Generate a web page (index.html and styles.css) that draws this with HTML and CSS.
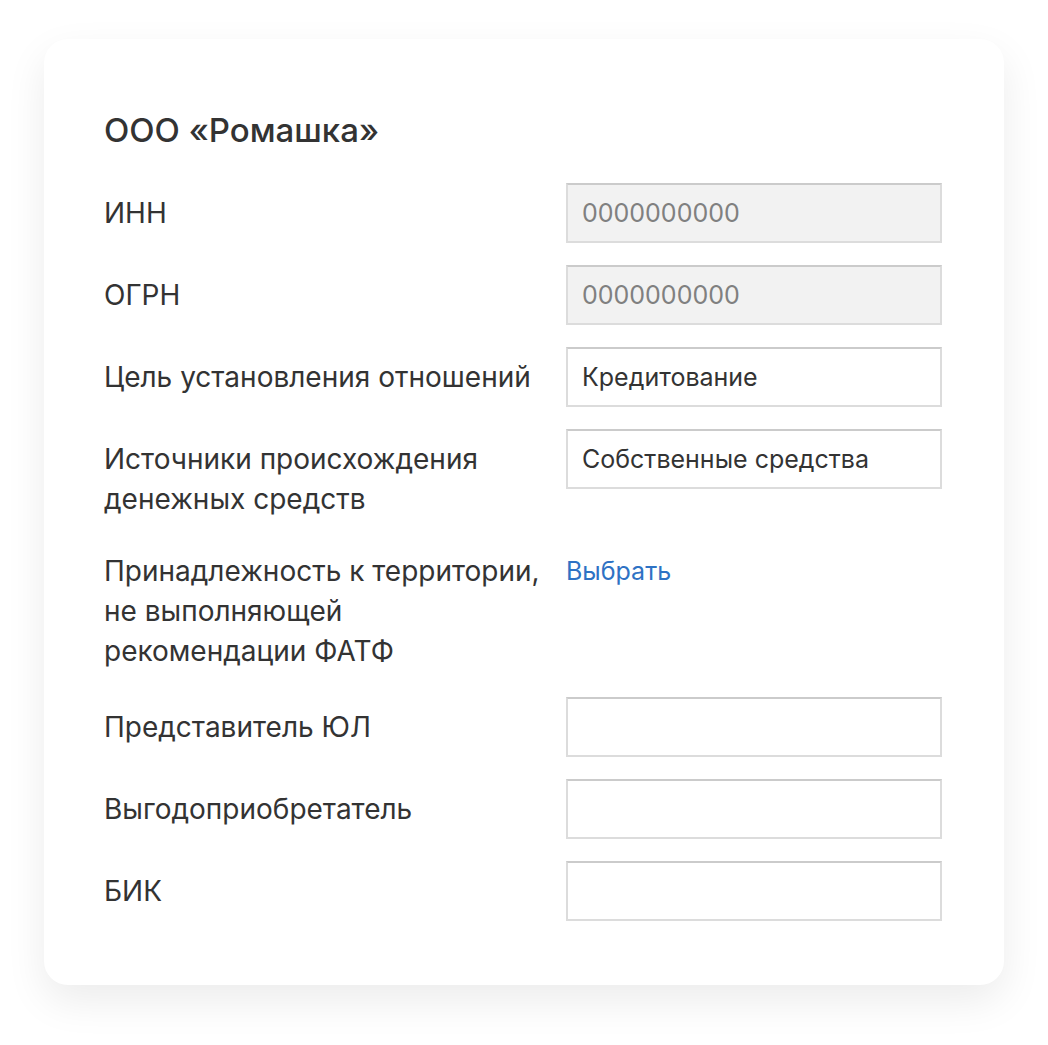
FILE: index.html
```html
<!DOCTYPE html>
<html lang="ru">
<head>
    <meta charset="UTF-8">
    <meta name="viewport" content="width=device-width, initial-scale=1.0">
    <title>ООО «Ромашка»</title>
    <link rel="stylesheet" href="styles.css">
</head>
<body>
<div class="page">
    <div class="card">
        <h1 class="title">ООО «Ромашка»</h1>

        <div class="form">
            <div class="row">
                <label class="label" for="inn">ИНН</label>
                <input class="field" type="text" id="inn" placeholder="0000000000" disabled>
            </div>
            <div class="row">
                <label class="label" for="ogrn">ОГРН</label>
                <input class="field" type="text" id="ogrn" placeholder="0000000000" disabled>
            </div>
            <div class="row">
                <label class="label" for="goal">Цель установления отношений</label>
                <input class="field" type="text" id="goal" value="Кредитование">
            </div>
            <div class="row">
                <label class="label" for="source">Источники происхождения денежных средств</label>
                <input class="field" type="text" id="source" value="Собственные средства">
            </div>
            <div class="row row-tall">
                <div class="label">Принадлежность к территории, не выполняющей рекомендации ФАТФ</div>
                <a class="link" href="#">Выбрать</a>
            </div>
            <div class="row">
                <label class="label" for="agent">Представитель ЮЛ</label>
                <input class="field" type="text" id="agent">
            </div>
            <div class="row">
                <label class="label" for="owner">Выгодоприобретатель</label>
                <input class="field" type="text" id="owner">
            </div>
            <div class="row">
                <label class="label" for="bik">БИК</label>
                <input class="field" type="text" id="bik">
            </div>
        </div>
    </div>
</div>
</body>
</html>
```

FILE: styles.css
```css
body {
    margin: 0;
    background-color: #fff;
    font-family: Inter, "Noto Sans", sans-serif;
    color: #333;
}

.page {
    padding: 39px 44px 60px;
}

.card {
    height: 946px;
    box-sizing: border-box;
    padding: 71px 60px 0;
    background-color: #fff;
    border-radius: 24px;
    box-shadow: 0 16px 40px rgba(0, 0, 0, 0.08);
}

.title {
    margin: 0 0 33px;
    font-size: 33px;
    line-height: 40px;
    font-weight: 500;
    color: #333;
}

.form {
    display: flex;
    flex-direction: column;
    gap: 22px;
}

.row {
    display: grid;
    grid-template-columns: 462px 376px;
    align-items: start;
}

.row-tall {
    margin-bottom: 4px;
}

.label {
    padding: 10px 20px 0 0;
    font-size: 28px;
    line-height: 40px;
}

.field {
    height: 60px;
    box-sizing: border-box;
    padding: 0 14px;
    border: 2px solid #dcdcdc;
    border-top-color: #cbcbcb;
    background-color: #fff;
    font-family: inherit;
    font-size: 25px;
    color: #333;
    outline: none;
}

.field:disabled {
    background-color: #f2f2f2;
}

.field::placeholder {
    color: #808080;
}

.link {
    padding-top: 10px;
    font-size: 25px;
    line-height: 40px;
    color: #2e72c4;
    text-decoration: none;
}
```
